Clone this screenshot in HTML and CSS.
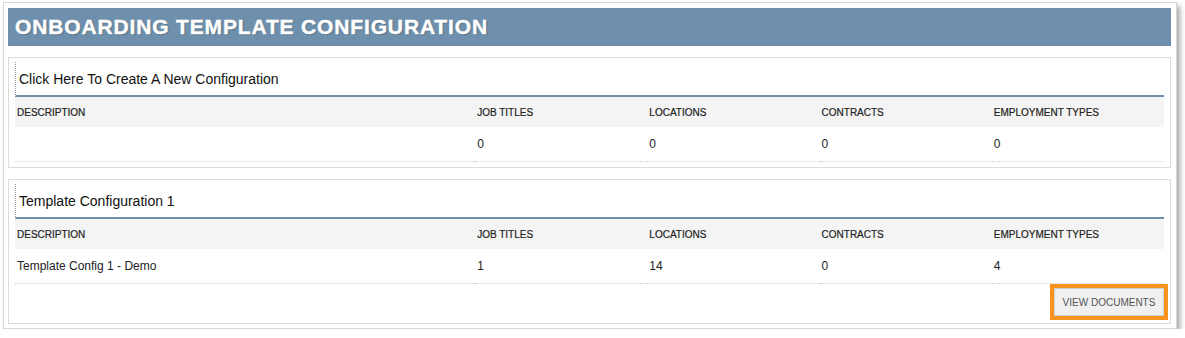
FILE: index.html
```html
<!DOCTYPE html>
<html lang="en">
<head>
  <meta charset="UTF-8">
  <title>Onboarding Template Configuration</title>
  <link rel="stylesheet" href="styles.css">
</head>
<body>
  <div class="frame">
    <h1 class="page-title">ONBOARDING TEMPLATE CONFIGURATION</h1>

    <div class="panel">
      <div class="panel-title">Click Here To Create A New Configuration</div>
      <table class="config-table">
        <thead>
          <tr>
            <th class="col-desc">DESCRIPTION</th>
            <th>JOB TITLES</th>
            <th>LOCATIONS</th>
            <th>CONTRACTS</th>
            <th>EMPLOYMENT TYPES</th>
          </tr>
        </thead>
        <tbody>
          <tr>
            <td></td>
            <td>0</td>
            <td>0</td>
            <td>0</td>
            <td>0</td>
          </tr>
        </tbody>
      </table>
    </div>

    <div class="panel">
      <div class="panel-title">Template Configuration 1</div>
      <table class="config-table">
        <thead>
          <tr>
            <th class="col-desc">DESCRIPTION</th>
            <th>JOB TITLES</th>
            <th>LOCATIONS</th>
            <th>CONTRACTS</th>
            <th>EMPLOYMENT TYPES</th>
          </tr>
        </thead>
        <tbody>
          <tr>
            <td>Template Config 1 - Demo</td>
            <td>1</td>
            <td>14</td>
            <td>0</td>
            <td>4</td>
          </tr>
        </tbody>
      </table>
      <div class="actions">
        <button class="btn highlight">VIEW DOCUMENTS</button>
      </div>
    </div>
  </div>
</body>
</html>
```

FILE: styles.css
```css
body {
  margin: 0;
  background: #fff;
  font-family: "Liberation Sans", Arial, sans-serif;
  color: #222;
}
.frame {
  box-sizing: border-box;
  width: 1174px;
  margin: 2px 0 0 3px;
  padding: 5px 5px 4px 4px;
  border: 1px solid #d6d6d6;
  background: #fff;
  box-shadow: 3px 4px 5px rgba(0, 0, 0, 0.35);
}
.page-title {
  margin: 0;
  height: 38px;
  line-height: 38px;
  padding-left: 7px;
  background: #6e90ad;
  color: #fff;
  font-size: 21px;
  font-weight: bold;
  letter-spacing: 0.85px;
  -webkit-text-stroke: 0.4px #fff;
  text-shadow: 1px 1px 1px rgba(0, 0, 0, 0.25);
}
.panel {
  margin-top: 11px;
  padding: 4px 6px 5px 6px;
  border: 1px solid #dcdcdc;
}
.panel-title {
  height: 33px;
  line-height: 34px;
  padding-left: 3px;
  border-left: 1px dotted #8a9bb0;
  border-bottom: 2px solid #6e8fab;
  font-size: 14px;
  color: #111;
}
.config-table {
  width: 100%;
  border-collapse: collapse;
  table-layout: fixed;
}
.config-table th {
  height: 30px;
  padding: 0 2px;
  background: #f4f4f4;
  font-size: 10px;
  font-weight: normal;
  color: #222;
  text-align: left;
  -webkit-text-stroke: 0.2px #222;
}
.config-table th.col-desc {
  width: 39.7%;
}
.config-table td {
  height: 34px;
  padding: 0 2px;
  font-size: 12px;
  color: #222;
  border-bottom: 1px dotted #cfcfcf;
}
.actions {
  display: flex;
  justify-content: flex-end;
  padding: 4px 0 2px;
}
.btn {
  width: 110px;
  height: 28px;
  padding: 0;
  background: #f0f0f0;
  border: 1px solid #cfcfcf;
  font-family: "Liberation Sans", Arial, sans-serif;
  font-size: 10px;
  color: #555;
}
.btn.highlight {
  outline: 4px solid #f7931e;
  outline-offset: 0;
}
```
